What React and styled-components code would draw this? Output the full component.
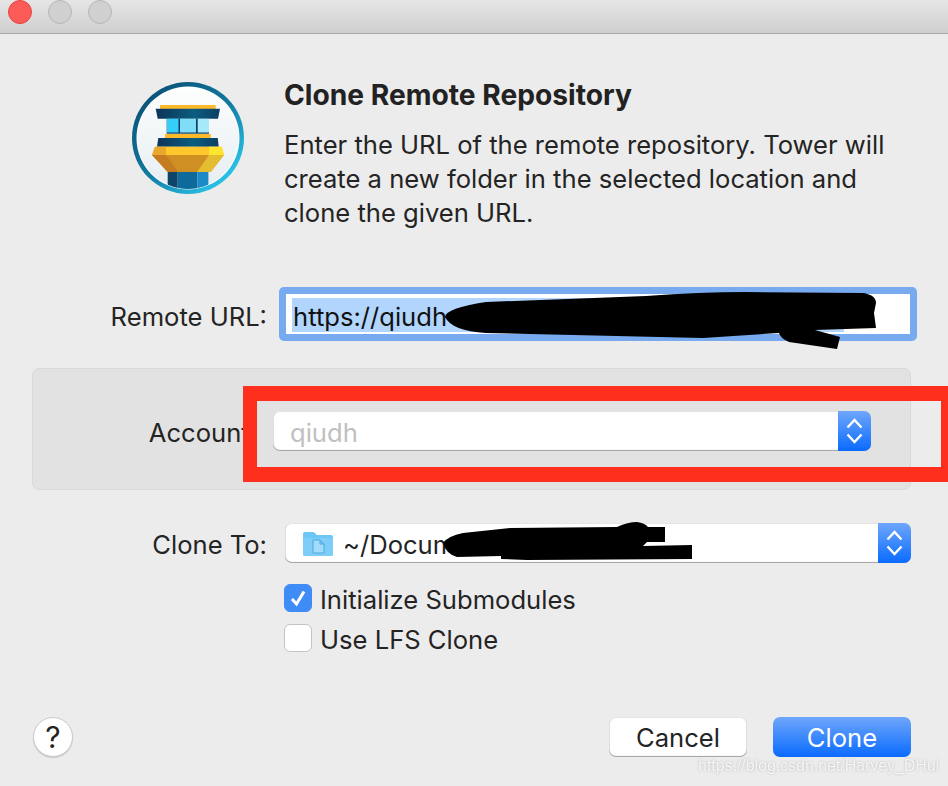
import React from 'react'
import styled, { createGlobalStyle } from 'styled-components'

const GlobalStyle = createGlobalStyle`
  html, body {
    margin: 0;
    padding: 0;
    background: #ececec;
  }
  * {
    box-sizing: border-box;
  }
`

const Window = styled.div`
  position: relative;
  width: 948px;
  height: 786px;
  overflow: hidden;
  background: #ececec;
  color: #242424;
  font-family: Inter, 'Liberation Sans', sans-serif;
  font-size: 25.6px;
`

const TitleBar = styled.div`
  display: flex;
  gap: 16px;
  height: 34px;
  padding-left: 8px;
  background: linear-gradient(#e6e6e6, #cfcfcf);
  border-bottom: 1px solid #a9a9a9;
`

const Light = styled.div`
  width: 24px;
  height: 24px;
  border-radius: 50%;
  background: ${p => (p.$red ? '#fc5b57' : '#d0d0d0')};
  border: 1px solid ${p => (p.$red ? '#e2463f' : '#b6b6b6')};
`

const Hero = styled.div`
  display: flex;
  gap: 40px;
  padding: 48px 0 0 132px;
  height: 253px;
`

const TextBlock = styled.div`
  width: 620px;
`

const Title = styled.div`
  font-size: 28.2px;
  font-weight: 700;
  line-height: 26px;
  margin-bottom: 20px;
  margin-left: -1px;
  color: #222;
`

const Description = styled.div`
  line-height: 34px;
  margin-left: -1px;
`

const Form = styled.div`
  padding: 0 31px 0 32px;
`

const Row = styled.div`
  display: flex;
  align-items: center;
  gap: ${p => p.$gap || 18}px;
`

const Label = styled.div`
  width: ${p => p.$width || 235}px;
  padding-top: ${p => p.$top || 2}px;
  text-align: right;
  white-space: nowrap;
  flex-shrink: 0;
`

const UrlField = styled.div`
  width: 638px;
  height: 54px;
  padding: 7px;
  background: #77aaee;
  border-radius: 5px;
`

const UrlInner = styled.div`
  height: 40px;
  padding: 4px 66px 2px 6px;
  background: #fff;
`

const Selection = styled.div`
  height: 34px;
  line-height: 37px;
  padding-left: 1px;
  background: #b2d5fd;
  color: #111;
`

const AccountBox = styled.div`
  width: 879px;
  height: 122px;
  margin-top: 27px;
  padding: 42px 0 0;
  background: #e2e2e2;
  border: 1px solid #d9d9d9;
  border-radius: 7px;
`

const Select = styled.div`
  display: flex;
  width: ${p => p.$width}px;
  height: 40px;
  overflow: hidden;
  background: #fff;
  border-radius: 7px;
  box-shadow: inset 0 0 0 1px rgba(0, 0, 0, 0.1), inset 0 -1px 1px rgba(0, 0, 0, 0.3);
`

const SelectValue = styled.div`
  flex: 1;
  display: flex;
  align-items: center;
  gap: 10px;
  padding: 2px 0 0 ${p => p.$pad}px;
  color: ${p => (p.$muted ? '#c0c0c0' : '#242424')};
`

const Stepper = styled.div`
  display: flex;
  align-items: center;
  justify-content: center;
  width: 33px;
  background: linear-gradient(#6ea6fb, #0a6bff);
`

const CloneRow = styled(Row)`
  margin-top: 33px;
`

const Checks = styled.div`
  display: flex;
  flex-direction: column;
  gap: 12px;
  margin: 21px 0 0 252px;
`

const CheckRow = styled.div`
  display: flex;
  align-items: center;
  gap: 8px;
  height: 28px;
`

const CheckText = styled.span`
  padding-top: 2px;
`

const Box = styled.div`
  display: flex;
  align-items: center;
  justify-content: center;
  width: 28px;
  height: 28px;
  border-radius: 6px;
  background: ${p => (p.$checked ? '#3f8cf6' : '#fff')};
  border: 1px solid ${p => (p.$checked ? '#3f8cf6' : '#c4c4c4')};
`

const Footer = styled.div`
  display: flex;
  align-items: center;
  margin-top: 65px;
  padding: 0 37px 0 33px;
`

const Help = styled.div`
  display: flex;
  align-items: center;
  justify-content: center;
  width: 40px;
  height: 40px;
  border-radius: 50%;
  font-size: 30px;
  background: #fff;
  border: 1px solid #cacaca;
  box-shadow: 0 1px 1px rgba(0, 0, 0, 0.15);
  margin-right: auto;
`

const Button = styled.div`
  display: flex;
  align-items: center;
  justify-content: center;
  width: 138px;
  height: 40px;
  border-radius: 7px;
  margin-left: ${p => p.$ml || 0}px;
  color: ${p => (p.$primary ? '#fff' : '#242424')};
  background: ${p => (p.$primary ? 'linear-gradient(#6ea6fb, #0a6bff)' : '#fff')};
  box-shadow: ${p => (p.$primary ? 'none' : 'inset 0 0 0 1px rgba(0, 0, 0, 0.1), inset 0 -1px 1px rgba(0, 0, 0, 0.3)')};
`

const RedMark = styled.div`
  position: absolute;
  left: 243px;
  top: 386px;
  width: 713px;
  height: 96px;
  border: 15px solid #ff2f1e;
  border-left-width: 14px;
`

const Scribble = styled.svg`
  position: absolute;
  left: 0;
  top: 0;
  pointer-events: none;
`

const Watermark = styled.div`
  position: absolute;
  left: 698px;
  top: 757px;
  font-family: 'Liberation Sans', Arial, sans-serif;
  font-size: 15.9px;
  white-space: nowrap;
  color: rgba(255, 255, 255, 0.85);
  text-shadow: 0 0 2px rgba(130, 130, 130, 0.55);
`

const TowerLogo = () => (
  <svg width="113" height="113" viewBox="132 82 113 113" style={{ flexShrink: 0 }}>
    <defs>
      <linearGradient id="ring" x1="0.15" y1="0.1" x2="0.85" y2="0.9">
        <stop offset="0" stopColor="#0a5379" />
        <stop offset="0.5" stopColor="#12799f" />
        <stop offset="1" stopColor="#2bc6ec" />
      </linearGradient>
      <linearGradient id="face" x1="0" y1="0" x2="0" y2="1">
        <stop offset="0" stopColor="#fdfefe" />
        <stop offset="1" stopColor="#e6edf1" />
      </linearGradient>
      <linearGradient id="navy" x1="0" y1="0" x2="1" y2="0">
        <stop offset="0" stopColor="#0c3558" />
        <stop offset="0.6" stopColor="#0b5d80" />
        <stop offset="1" stopColor="#0c3f62" />
      </linearGradient>
      <clipPath id="inner">
        <circle cx="188" cy="138" r="51" />
      </clipPath>
    </defs>
    <circle cx="188" cy="138" r="56" fill="url(#ring)" />
    <circle cx="188" cy="138" r="51.5" fill="#fff" />
    <circle cx="188" cy="138" r="50.5" fill="url(#face)" />
    <rect x="160" y="105" width="55.7" height="4" fill="#fdb92a" />
    <polygon points="155.7,108.7 220,108.7 218,118.7 157.7,118.7" fill="url(#navy)" />
    <rect x="166.7" y="118.7" width="42.3" height="15" fill="#0f3d5e" />
    <rect x="167" y="118.7" width="11.5" height="13.8" fill="#35cdf9" />
    <rect x="180" y="118.7" width="16" height="13.8" fill="#7fddf8" />
    <rect x="197.7" y="118.7" width="11.3" height="13.8" fill="#a8e8fb" />
    <rect x="165" y="134" width="45.7" height="4" fill="#fdb92a" />
    <polygon points="158.3,138 217.7,138 218.7,146.7 157,146.7" fill="url(#navy)" />
    <polygon points="155,146.7 221.7,146.7 224,155 152,155" fill="#fec82c" />
    <polygon points="155,146.7 166,146.7 166,155 152,155" fill="#e9a82b" />
    <polygon points="209,146.7 221.7,146.7 224,155 209,155" fill="#ffe52e" />
    <polygon points="152,155 224,155 210.7,172 167.7,172" fill="#d08f22" />
    <polygon points="152,155 166,155 178,172 167.7,172" fill="#c57c20" />
    <polygon points="209,155 224,155 210.7,172 197,172" fill="#e5bd30" />
    <g clipPath="url(#inner)">
      <rect x="167.7" y="172" width="10" height="22" fill="#0d4468" />
      <rect x="177.7" y="172" width="19.7" height="22" fill="#0f6a9c" />
      <rect x="197.4" y="172" width="11" height="22" fill="#1b8ac6" />
    </g>
  </svg>
)

const Chevrons = () => (
  <svg width="17" height="28" viewBox="0 0 17 28" fill="none" stroke="#fff" strokeWidth="2.4">
    <path d="M1.5 10.5 L8.5 3 L15.5 10.5" />
    <path d="M1.5 17.5 L8.5 25 L15.5 17.5" />
  </svg>
)

const FolderIcon = () => (
  <svg width="30" height="24" viewBox="0 0 30 24" style={{ flexShrink: 0 }}>
    <path d="M0 2 Q0 0 2 0 H10 Q11.5 0 12.5 1.5 L13.5 3 H28 Q30 3 30 5 V22 Q30 24 28 24 H2 Q0 24 0 22 Z" fill="#6cc6f6" />
    <path d="M0 6 H30 V22 Q30 24 28 24 H2 Q0 24 0 22 Z" fill="#7dcdf8" />
    <path d="M10 8 H17 L21 12 V21 H10 Z M17 8 V12 H21" fill="#a2dcfb" stroke="#4aa8de" strokeWidth="1" />
  </svg>
)

const CheckMark = () => (
  <svg width="20" height="20" viewBox="0 0 20 20" fill="none" stroke="#fff" strokeWidth="3">
    <path d="M4 11 L8.5 16 L16 3.5" />
  </svg>
)

const App = () => (
  <Window>
    <GlobalStyle />
    <TitleBar>
      <Light $red />
      <Light />
      <Light />
    </TitleBar>
    <Hero>
      <TowerLogo />
      <TextBlock>
        <Title>Clone Remote Repository</Title>
        <Description>
          Enter the URL of the remote repository. Tower will
          <br />
          create a new folder in the selected location and
          <br />
          clone the given URL.
        </Description>
      </TextBlock>
    </Hero>
    <Form>
      <Row $gap={12}>
        <Label $top={5}>Remote URL:</Label>
        <UrlField>
          <UrlInner>
            <Selection>https://qiudh</Selection>
          </UrlInner>
        </UrlField>
      </Row>
      <AccountBox>
        <Row $gap={16}>
          <Label $width={224}>Account:</Label>
          <Select $width={598}>
            <SelectValue $pad={17} $muted>qiudh</SelectValue>
            <Stepper><Chevrons /></Stepper>
          </Select>
        </Row>
      </AccountBox>
      <CloneRow>
        <Label $top={3}>Clone To:</Label>
        <Select $width={626}>
          <SelectValue $pad={18}>
            <FolderIcon />
            ~/Docum
          </SelectValue>
          <Stepper><Chevrons /></Stepper>
        </Select>
      </CloneRow>
      <Checks>
        <CheckRow>
          <Box $checked><CheckMark /></Box>
          <CheckText>Initialize Submodules</CheckText>
        </CheckRow>
        <CheckRow>
          <Box />
          <CheckText>Use LFS Clone</CheckText>
        </CheckRow>
      </Checks>
    </Form>
    <Footer>
      <Help>?</Help>
      <Button>Cancel</Button>
      <Button $primary $ml={26}>Clone</Button>
    </Footer>
    <RedMark />
    <Scribble width="948" height="786" viewBox="0 0 948 786">
      <path
        d="M445 317 Q446 308 486 302 L646 296 Q700 292 746 292 L863 293 Q876 295 876 303 L874 313 L876 328 L815 330 L840 337 L837 349 L789 342 Q780 338 779 333 L703 338 L486 333 Q452 331 445 317 Z"
        fill="#000"
      />
      <path
        d="M443 543 Q448 536 463 533 L510 528 L617 527 Q628 522 637 522 Q645 523 648 527 L665 527 L665 542 L647 542 L643 546 L692 545 L692 559 L527 560 L501 559 L501 556 L457 557 Q446 554 443 543 Z"
        fill="#000"
      />
    </Scribble>
    <Watermark>https://blog.csdn.net/Harvey_DHui</Watermark>
  </Window>
)

export default App
